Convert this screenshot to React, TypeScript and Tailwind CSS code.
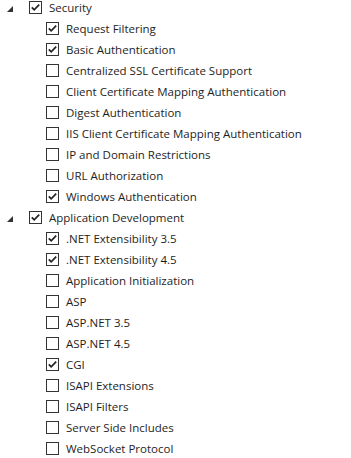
const groups = [
  {
    name: "Security",
    checked: true,
    items: [
      ["Request Filtering", true],
      ["Basic Authentication", true],
      ["Centralized SSL Certificate Support", false],
      ["Client Certificate Mapping Authentication", false],
      ["Digest Authentication", false],
      ["IIS Client Certificate Mapping Authentication", false],
      ["IP and Domain Restrictions", false],
      ["URL Authorization", false],
      ["Windows Authentication", true],
    ] as [string, boolean][],
  },
  {
    name: "Application Development",
    checked: true,
    items: [
      [".NET Extensibility 3.5", true],
      [".NET Extensibility 4.5", true],
      ["Application Initialization", false],
      ["ASP", false],
      ["ASP.NET 3.5", false],
      ["ASP.NET 4.5", false],
      ["CGI", true],
      ["ISAPI Extensions", false],
      ["ISAPI Filters", false],
      ["Server Side Includes", false],
      ["WebSocket Protocol", false],
    ] as [string, boolean][],
  },
];

function Box({ checked }: { checked: boolean }) {
  return (
    <span className="flex h-[13px] w-[13px] shrink-0 items-center justify-center border border-[#333333] bg-white">
      {checked && (
        <svg width="11" height="11" viewBox="0 0 11 11">
          <path d="M1.8 5.3 L4.2 7.8 L9.2 2.6" fill="none" stroke="#222" strokeWidth="1.7" />
        </svg>
      )}
    </span>
  );
}

function Row({ label, checked, expander }: { label: string; checked: boolean; expander?: boolean }) {
  return (
    <div className={`flex h-[21px] items-center ${expander ? "pl-[7px]" : "pl-[46px]"}`}>
      {expander && (
        <svg width="7" height="7" viewBox="0 0 7 7" className="mr-[15px] mt-[4px] shrink-0">
          <path d="M6 0 L6 6 L0 6 Z" fill="#333" />
        </svg>
      )}
      <Box checked={checked} />
      <span className="ml-[7px] whitespace-nowrap">{label}</span>
    </div>
  );
}

export default function App() {
  return (
    <div className="h-[458px] w-[351px] overflow-hidden bg-white text-[11.5px] text-[#1e1e1e] [font-family:'Open_Sans',sans-serif]">
      <div className="-mt-[3px]">
        {groups.map((g) => (
          <div key={g.name}>
            <Row label={g.name} checked={g.checked} expander />
            {g.items.map(([label, c]) => (
              <Row key={label} label={label} checked={c} />
            ))}
          </div>
        ))}
      </div>
    </div>
  );
}
